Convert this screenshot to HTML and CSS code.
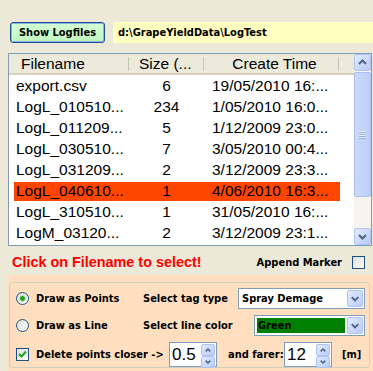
FILE: index.html
```html
<!DOCTYPE html>
<html lang="en">

<head>
    <meta charset="UTF-8">
    <meta name="viewport" content="width=device-width, initial-scale=1.0">
    <title>Logfiles</title>
    <link rel="stylesheet" href="styles.css">
</head>

<body>

<div class="top">
    <button class="btn-show">Show Logfiles</button>
    <div class="path">d:\GrapeYieldData\LogTest</div>
</div>

<div class="list">
    <div class="list-main">
        <div class="list-head">
            <div class="hcol h1">Filename</div>
            <div class="hcol h2">Size (...</div>
            <div class="hcol h3">Create Time</div>
        </div>
        <div class="row"><span class="c1">export.csv</span><span class="c2">6</span><span class="c3">19/05/2010 16:...</span></div>
        <div class="row"><span class="c1">LogL_010510...</span><span class="c2">234</span><span class="c3">1/05/2010 16:0...</span></div>
        <div class="row"><span class="c1">LogL_011209...</span><span class="c2">5</span><span class="c3">1/12/2009 23:0...</span></div>
        <div class="row"><span class="c1">LogL_030510...</span><span class="c2">7</span><span class="c3">3/05/2010 00:4...</span></div>
        <div class="row"><span class="c1">LogL_031209...</span><span class="c2">2</span><span class="c3">3/12/2009 23:3...</span></div>
        <div class="row selected"><span class="c1">LogL_040610...</span><span class="c2">1</span><span class="c3">4/06/2010 16:3...</span></div>
        <div class="row"><span class="c1">LogL_310510...</span><span class="c2">1</span><span class="c3">31/05/2010 16:...</span></div>
        <div class="row"><span class="c1">LogM_03120...</span><span class="c2">2</span><span class="c3">3/12/2009 23:1...</span></div>
    </div>
    <div class="vscroll">
        <div class="sbtn">
            <svg width="15" height="15" viewBox="0 0 15 15"><path d="M4 9 L7.5 5.5 L11 9" fill="none" stroke="#4d6185" stroke-width="2"/></svg>
        </div>
        <div class="thumb"><span class="grip"></span></div>
        <div class="track"></div>
        <div class="sbtn">
            <svg width="15" height="15" viewBox="0 0 15 15"><path d="M4 6 L7.5 9.5 L11 6" fill="none" stroke="#4d6185" stroke-width="2"/></svg>
        </div>
    </div>
</div>

<div class="status">
    <span class="hint">Click on Filename to select!</span>
    <span class="append">Append Marker</span>
    <span class="chk"></span>
</div>

<div class="panel">
    <div class="group">
        <div class="grow">
            <span class="opt"><span class="radio on"></span>Draw as Points</span>
            <span class="lbl">Select tag type</span>
            <div class="combo tag">
                <span class="combo-text">Spray Demage</span>
                <span class="drop"><svg width="15" height="15" viewBox="0 0 15 15"><path d="M4 6 L7.5 9.5 L11 6" fill="none" stroke="#4d6185" stroke-width="2"/></svg></span>
            </div>
        </div>
        <div class="grow">
            <span class="opt"><span class="radio"></span>Draw as Line</span>
            <span class="lbl">Select line color</span>
            <div class="combo color">
                <span class="combo-text green">Green</span>
                <span class="drop"><svg width="15" height="15" viewBox="0 0 15 15"><path d="M4 6 L7.5 9.5 L11 6" fill="none" stroke="#4d6185" stroke-width="2"/></svg></span>
            </div>
        </div>
        <div class="grow last">
            <span class="opt wide"><span class="chk checked"><svg width="11" height="11" viewBox="0 0 11 11"><path d="M2 5 L4.5 7.5 L9 2.5" fill="none" stroke="#21a121" stroke-width="2"/></svg></span>Delete points closer -&gt;</span>
            <div class="spin first">
                <span class="spin-val">0.5</span>
                <span class="spin-btns">
                    <span class="sb"><svg width="13" height="10" viewBox="0 0 13 10"><path d="M4 6.5 L6.5 4 L9 6.5" fill="none" stroke="#4d6185" stroke-width="1.6"/></svg></span>
                    <span class="sb"><svg width="13" height="10" viewBox="0 0 13 10"><path d="M4 3.5 L6.5 6 L9 3.5" fill="none" stroke="#4d6185" stroke-width="1.6"/></svg></span>
                </span>
            </div>
            <span class="farer">and farer:</span>
            <div class="spin">
                <span class="spin-val">12</span>
                <span class="spin-btns">
                    <span class="sb"><svg width="13" height="10" viewBox="0 0 13 10"><path d="M4 6.5 L6.5 4 L9 6.5" fill="none" stroke="#4d6185" stroke-width="1.6"/></svg></span>
                    <span class="sb"><svg width="13" height="10" viewBox="0 0 13 10"><path d="M4 3.5 L6.5 6 L9 3.5" fill="none" stroke="#4d6185" stroke-width="1.6"/></svg></span>
                </span>
            </div>
            <span class="unit">[m]</span>
        </div>
    </div>
</div>

</body>
</html>
```

FILE: styles.css
```css
body {
    margin: 0;
    width: 373px;
    height: 371px;
    overflow: hidden;
    background-color: #ece9d8;
    font-family: "DejaVu Sans Condensed", "DejaVu Sans", sans-serif;
    font-stretch: condensed;
    font-weight: bold;
    font-size: 11px;
    color: #000;
}

/* top bar */
.top {
    display: flex;
    padding: 22px 0 0 10px;
    gap: 8px;
    height: 21px;
}

.btn-show {
    width: 95px;
    height: 21px;
    padding: 0;
    background: linear-gradient(#d4ffd4, #bff7bf);
    border: 1px solid #1f4e94;
    border-radius: 3px;
    box-shadow: inset 0 0 0 1px #8fb3de;
    font: inherit;
    font-stretch: condensed;
    color: #000;
}

.path {
    flex: 1;
    background-color: #ffffc0;
    line-height: 21px;
    padding-left: 5px;
}

/* file list */
.list {
    display: flex;
    box-sizing: border-box;
    width: 364px;
    height: 193px;
    margin: 10px 0 0 8px;
    border: 1px solid #7f9db9;
    background-color: #fff;
    font-family: "Liberation Sans", Arial, sans-serif;
    font-stretch: normal;
    font-weight: normal;
    font-size: 15.5px;
}

.list-main {
    flex: 1;
}

.list-head {
    display: flex;
    height: 19px;
    line-height: 19px;
    background-color: #ebeadb;
    border-bottom: 2px solid #d6d2c2;
}

.hcol {
    box-sizing: border-box;
    background: linear-gradient(#c7c5b2, #c7c5b2) right center / 1px 14px no-repeat;
}

.h1 { width: 120px; padding-left: 12px; }
.h2 { width: 75px; padding-left: 10px; }
.h3 { width: 135px; text-align: center; padding-left: 6px; }

.row {
    display: grid;
    grid-template-columns: 115px 75px 136px;
    width: 326px;
    height: 21px;
    line-height: 21px;
    margin-left: 5px;
    white-space: nowrap;
}

.row.selected {
    background: linear-gradient(to bottom, transparent 2px, #ff4500 2px);
}

.c1 { padding-left: 2px; }
.c2 { text-align: center; }
.c3 { padding-left: 8px; }

/* scrollbar */
.vscroll {
    display: flex;
    flex-direction: column;
    width: 17px;
    background-color: #f5f4ef;
}

.sbtn, .drop, .sb {
    display: flex;
    align-items: center;
    justify-content: center;
    box-sizing: border-box;
    background: linear-gradient(135deg, #e1eafe, #b9ccf7);
    border: 1px solid #b1c4f0;
    border-radius: 2px;
}

.sbtn {
    height: 17px;
}

.thumb {
    display: flex;
    align-items: center;
    justify-content: center;
    box-sizing: border-box;
    height: 125px;
    margin-top: 1px;
    background: linear-gradient(to right, #cad8fc, #bcd0fa);
    border: 1px solid #a9bff1;
    border-radius: 2px;
}

.grip {
    width: 7px;
    height: 8px;
    background: repeating-linear-gradient(#eef3fe 0 1px, #8faaeb 1px 2px);
}

.track {
    flex: 1;
}

/* status line */
.status {
    display: flex;
    align-items: center;
    height: 26px;
    padding: 3px 8px 0 12px;
}

.hint {
    flex: 1;
    color: #ff0000;
    font-family: "Liberation Sans", Arial, sans-serif;
    font-stretch: normal;
    font-size: 14.4px;
}

.append {
    margin-right: 10px;
}

.chk {
    display: flex;
    align-items: center;
    justify-content: center;
    box-sizing: border-box;
    width: 13px;
    height: 13px;
    border: 1px solid #1c5180;
    background: linear-gradient(135deg, #dcdcd7, #fff);
}

/* options panel */
.panel {
    box-sizing: border-box;
    height: 96px;
    margin-left: 8px;
    padding: 7px 3px 0 1px;
    background-color: #ffdfc0;
}

.group {
    display: flex;
    flex-direction: column;
    gap: 5px;
    box-sizing: border-box;
    height: 86px;
    padding: 5px 4px 0 6px;
    border: 1px solid #d0d0bf;
    border-radius: 4px;
}

.grow {
    display: flex;
    align-items: center;
    height: 22px;
}

.grow.last {
    height: 26px;
}

.opt {
    display: flex;
    align-items: center;
    gap: 7px;
    width: 127px;
}

.opt.wide {
    width: 153px;
}

.radio {
    box-sizing: border-box;
    width: 13px;
    height: 13px;
    border: 1px solid #1c5180;
    border-radius: 50%;
    background: linear-gradient(135deg, #dcdcd7, #fff);
}

.radio.on {
    background: radial-gradient(circle, #21a121 0 2px, #7fd77f 2.5px, transparent 3.5px),
                linear-gradient(135deg, #dcdcd7, #fff);
}

.combo {
    display: flex;
    align-items: center;
    box-sizing: border-box;
    height: 21px;
    margin-left: auto;
    border: 1px solid #7f9db9;
    background-color: #fff;
}

.combo.tag { width: 127px; }
.combo.color { width: 111px; }

.combo-text {
    flex: 1;
    padding-left: 3px;
}

.combo-text.green {
    height: 15px;
    line-height: 15px;
    margin: 0 1px 0 2px;
    padding-left: 1px;
    background-color: #008000;
}

.drop {
    width: 16px;
    height: 17px;
    margin: 0 1px;
}

.spin {
    display: flex;
    box-sizing: border-box;
    width: 48px;
    height: 25px;
    border: 1px solid #7f9db9;
    background-color: #fff;
}

.spin-val {
    flex: 1;
    padding-left: 2px;
    line-height: 23px;
    font-family: "Liberation Sans", Arial, sans-serif;
    font-stretch: normal;
    font-weight: normal;
    font-size: 17px;
}

.spin-btns {
    display: flex;
    flex-direction: column;
    width: 14px;
    margin: 1px 1px 1px 0;
}

.sb {
    flex: 1;
}

.farer {
    width: 56px;
    margin-left: 11px;
}

.unit {
    margin-left: 10px;
}
```
